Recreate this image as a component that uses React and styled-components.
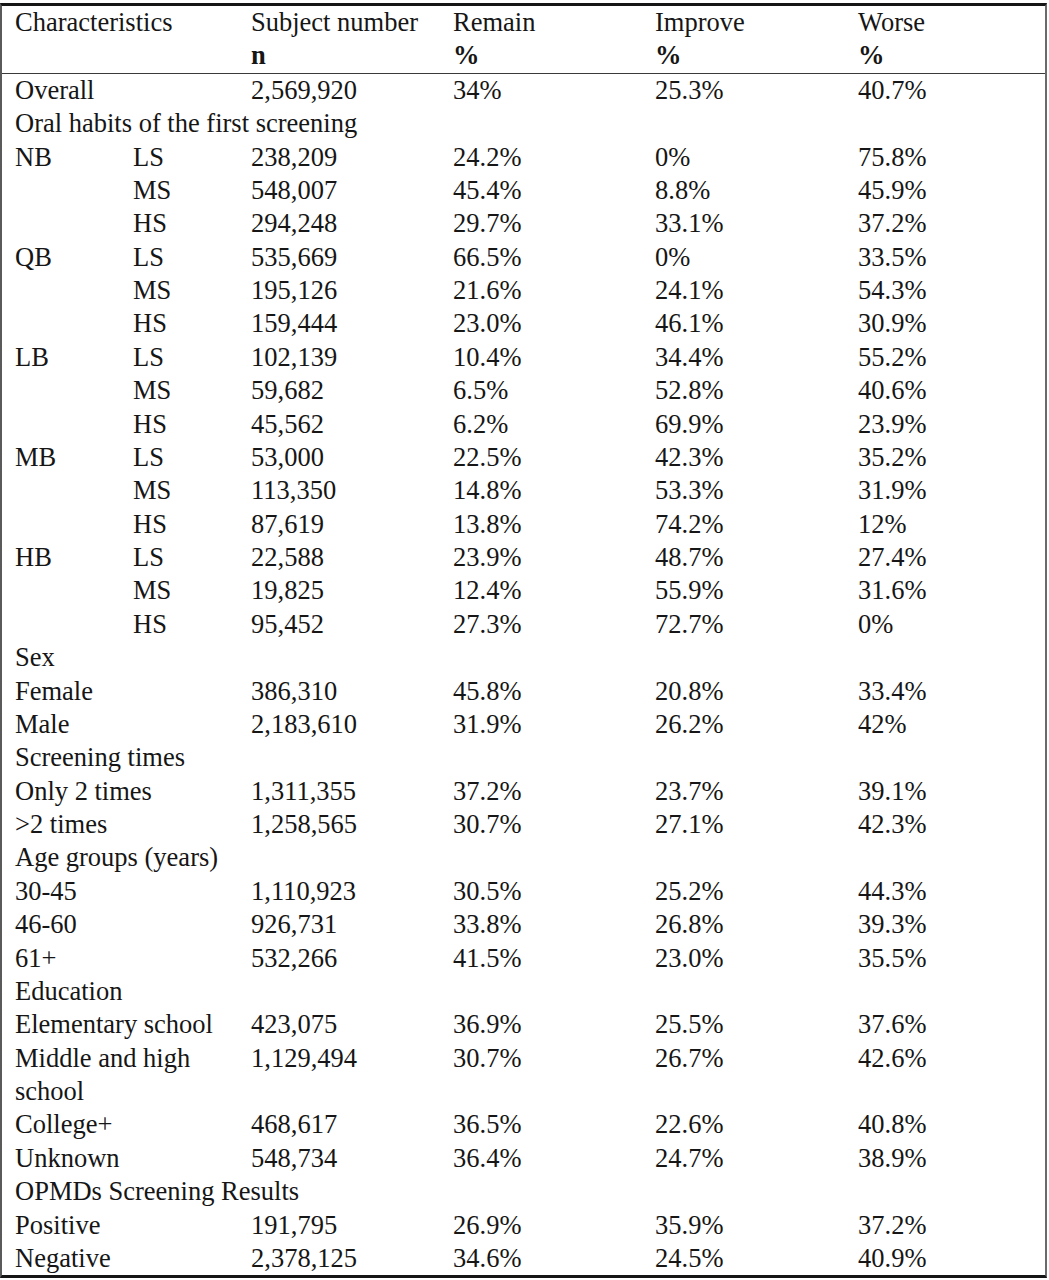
import React from 'react';
import styled, { createGlobalStyle } from 'styled-components';

const GlobalStyle = createGlobalStyle`
  html, body {
    margin: 0;
    padding: 0;
    background: #ffffff;
  }
`;

const Page = styled.div`
  padding-top: 3px;
  width: 1049px;
`;

const Table = styled.table`
  width: 1047px;
  table-layout: fixed;
  border-collapse: separate;
  border-spacing: 0;
  border-top: 3px solid #151515;
  border-bottom: 3px solid #151515;
  border-left: 2px solid #5a5a5a;
  border-right: 2px solid #6a6a6a;
  font-family: 'Liberation Serif', 'Times New Roman', serif;
  font-size: 26.5px;
  line-height: 33.38px;
  color: #161616;
`;

const Cell = styled.td`
  padding: 0 0 0 13px;
  vertical-align: top;
  text-align: left;
  font-weight: ${({ bold }) => (bold ? 700 : 400)};
  border-bottom: ${({ ruled }) => (ruled ? '1px solid #3a3a3a' : 'none')};
  white-space: ${({ nowrap }) => (nowrap ? 'nowrap' : 'normal')};
`;

const HeadCell = styled(Cell).attrs({ as: 'th' })``;

const columns = [118, 118, 202, 202, 203, 200];

const groups = [
  {
    name: 'NB',
    rows: [
      ['LS', '238,209', '24.2%', '0%', '75.8%'],
      ['MS', '548,007', '45.4%', '8.8%', '45.9%'],
      ['HS', '294,248', '29.7%', '33.1%', '37.2%'],
    ],
  },
  {
    name: 'QB',
    rows: [
      ['LS', '535,669', '66.5%', '0%', '33.5%'],
      ['MS', '195,126', '21.6%', '24.1%', '54.3%'],
      ['HS', '159,444', '23.0%', '46.1%', '30.9%'],
    ],
  },
  {
    name: 'LB',
    rows: [
      ['LS', '102,139', '10.4%', '34.4%', '55.2%'],
      ['MS', '59,682', '6.5%', '52.8%', '40.6%'],
      ['HS', '45,562', '6.2%', '69.9%', '23.9%'],
    ],
  },
  {
    name: 'MB',
    rows: [
      ['LS', '53,000', '22.5%', '42.3%', '35.2%'],
      ['MS', '113,350', '14.8%', '53.3%', '31.9%'],
      ['HS', '87,619', '13.8%', '74.2%', '12%'],
    ],
  },
  {
    name: 'HB',
    rows: [
      ['LS', '22,588', '23.9%', '48.7%', '27.4%'],
      ['MS', '19,825', '12.4%', '55.9%', '31.6%'],
      ['HS', '95,452', '27.3%', '72.7%', '0%'],
    ],
  },
];

const sections = [
  {
    title: 'Sex',
    rows: [
      ['Female', '386,310', '45.8%', '20.8%', '33.4%'],
      ['Male', '2,183,610', '31.9%', '26.2%', '42%'],
    ],
  },
  {
    title: 'Screening times',
    rows: [
      ['Only 2 times', '1,311,355', '37.2%', '23.7%', '39.1%'],
      ['>2 times', '1,258,565', '30.7%', '27.1%', '42.3%'],
    ],
  },
  {
    title: 'Age groups (years)',
    rows: [
      ['30-45', '1,110,923', '30.5%', '25.2%', '44.3%'],
      ['46-60', '926,731', '33.8%', '26.8%', '39.3%'],
      ['61+', '532,266', '41.5%', '23.0%', '35.5%'],
    ],
  },
  {
    title: 'Education',
    rows: [
      ['Elementary school', '423,075', '36.9%', '25.5%', '37.6%'],
      ['Middle and high school', '1,129,494', '30.7%', '26.7%', '42.6%'],
      ['College+', '468,617', '36.5%', '22.6%', '40.8%'],
      ['Unknown', '548,734', '36.4%', '24.7%', '38.9%'],
    ],
  },
  {
    title: 'OPMDs Screening Results',
    rows: [
      ['Positive', '191,795', '26.9%', '35.9%', '37.2%'],
      ['Negative', '2,378,125', '34.6%', '24.5%', '40.9%'],
    ],
  },
];

const TitleRow = ({ title }) => (
  <tr>
    <Cell colSpan={6} nowrap>
      {title}
    </Cell>
  </tr>
);

const LabelRow = ({ row }) => {
  const [label, ...values] = row;
  return (
    <tr>
      <Cell colSpan={2}>{label}</Cell>
      {values.map((value, idx) => (
        <Cell key={idx}>{value}</Cell>
      ))}
    </tr>
  );
};

const App = () => (
  <>
    <GlobalStyle />
    <Page>
      <Table>
        <colgroup>
          {columns.map((width, idx) => (
            <col key={idx} style={{ width }} />
          ))}
        </colgroup>
        <thead>
          <tr>
            <HeadCell colSpan={2}>Characteristics</HeadCell>
            <HeadCell>Subject number</HeadCell>
            <HeadCell>Remain</HeadCell>
            <HeadCell>Improve</HeadCell>
            <HeadCell>Worse</HeadCell>
          </tr>
          <tr>
            <HeadCell colSpan={2} ruled />
            <HeadCell bold ruled>n</HeadCell>
            <HeadCell bold ruled>%</HeadCell>
            <HeadCell bold ruled>%</HeadCell>
            <HeadCell bold ruled>%</HeadCell>
          </tr>
        </thead>
        <tbody>
          <LabelRow row={['Overall', '2,569,920', '34%', '25.3%', '40.7%']} />
          <TitleRow title="Oral habits of the first screening" />
          {groups.map(({ name, rows }) =>
            rows.map(([level, ...values], idx) => (
              <tr key={name + level}>
                <Cell>{idx === 0 ? name : ''}</Cell>
                <Cell>{level}</Cell>
                {values.map((value, vIdx) => (
                  <Cell key={vIdx}>{value}</Cell>
                ))}
              </tr>
            ))
          )}
          {sections.map(({ title, rows }) => (
            <React.Fragment key={title}>
              <TitleRow title={title} />
              {rows.map((row) => (
                <LabelRow key={row[0]} row={row} />
              ))}
            </React.Fragment>
          ))}
        </tbody>
      </Table>
    </Page>
  </>
);

export default App;
